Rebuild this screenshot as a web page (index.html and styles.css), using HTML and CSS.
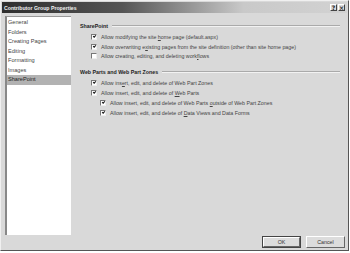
FILE: index.html
```html
<!DOCTYPE html>
<html>
<head>
	<title>Contributor Group Properties</title>
	<meta charset="utf-8">
	<link rel="stylesheet" href="styles.css">
</head>
<body>
<div class="dialog">
	<div class="titlebar">
		<span class="title">Contributor Group Properties</span>
		<span class="tbuttons">
			<span class="tbtn">?</span>
			<span class="tbtn">&#215;</span>
		</span>
	</div>

	<div class="main">
		<ul class="pages">
			<li>General</li>
			<li>Folders</li>
			<li>Creating Pages</li>
			<li>Editing</li>
			<li>Formatting</li>
			<li>Images</li>
			<li class="selected">SharePoint</li>
		</ul>

		<div class="panel">
			<div class="group">
				<div class="heading"><span>SharePoint</span><span class="rule"></span></div>
				<div class="row"><span class="box checked"></span><span>Allow modifying the site <u>h</u>ome page (default.aspx)</span></div>
				<div class="row"><span class="box checked"></span><span>Allow overwriting e<u>x</u>isting pages from the site definition (other than site home page)</span></div>
				<div class="row"><span class="box"></span><span>Allow creating, editing, and deleting work<u>f</u>lows</span></div>
			</div>

			<div class="group">
				<div class="heading"><span>Web Parts and Web Part Zones</span><span class="rule"></span></div>
				<div class="row"><span class="box checked"></span><span>Allow ins<u>e</u>rt, edit, and delete of Web Part Zones</span></div>
				<div class="row"><span class="box checked"></span><span>Allow insert, edit, and delete of <u>W</u>eb Parts</span></div>
				<div class="row sub"><span class="box checked"></span><span>Allow insert, edit, and delete of Web Parts <u>o</u>utside of Web Part Zones</span></div>
				<div class="row sub"><span class="box checked"></span><span>Allow insert, edit, and delete of <u>D</u>ata Views and Data Forms</span></div>
			</div>
		</div>
	</div>

	<div class="footer">
		<button class="btn default">OK</button>
		<button class="btn">Cancel</button>
	</div>
</div>
</body>
</html>
```

FILE: styles.css
```css
body {
    margin: 0;
    font-family: "Liberation Sans", Arial, sans-serif;
    font-size: 5.3px;
    color: #333;
    background: #fff;
}

.dialog {
    width: 349px;
    height: 251px;
    background-color: #d9d9d9;
    border: 1px solid;
    border-color: #f0f0f0 #555 #555 #f0f0f0;
    display: flex;
    flex-direction: column;
    padding: 1px 0 0 1px;
    box-sizing: border-box;
}

.titlebar {
    height: 11px;
    margin-right: 1px;
    background: linear-gradient(to right, #2e2e2e 0%, #555 35%, #c9c9c9 70%, #d2d2d2 100%);
    display: flex;
    align-items: center;
    justify-content: space-between;
    padding-left: 2px;
}

.title {
    color: #f2f2f2;
    font-weight: bold;
    font-size: 5.2px;
}

.tbuttons {
    display: flex;
    gap: 1px;
    margin-right: 2px;
}

.tbtn {
    width: 7px;
    height: 7px;
    background: #d9d9d9;
    border: 1px solid;
    border-color: #fff #444 #444 #fff;
    box-sizing: border-box;
    font-family: "DejaVu Sans", sans-serif;
    font-size: 6px;
    font-weight: bold;
    line-height: 5px;
    text-align: center;
    color: #222;
}

.main {
    flex: 1;
    display: flex;
    padding: 3px 0 0 3px;
}

.pages {
    list-style-type: none;
    margin: 0;
    padding: 1px 0 0 0;
    width: 66px;
    height: 219px;
    box-sizing: border-box;
    background-color: #fff;
    border-left: 2px solid #888;
    border-top: 1px solid #999;
    font-size: 5.6px;
    color: #444;
}

.pages li {
    height: 9.5px;
    line-height: 9.5px;
    padding-left: 1px;
}

.pages li.selected {
    background-color: #b2b2b2;
    color: #222;
}

.panel {
    flex: 1;
    padding: 5px 8px 0 9px;
}

.group {
    margin-bottom: 6px;
}

.heading {
    display: flex;
    align-items: center;
    font-weight: bold;
    color: #222;
    height: 9px;
    margin-bottom: 2px;
}

.rule {
    flex: 1;
    height: 0;
    border-top: 1px solid #aaa;
    border-bottom: 1px solid #f2f2f2;
    margin: 0 0 0 4px;
}

.row {
    display: flex;
    align-items: center;
    height: 9.8px;
    padding-left: 11px;
    color: #444;
}

.row.sub {
    padding-left: 20px;
}

.box {
    flex: none;
    width: 6px;
    height: 6px;
    box-sizing: border-box;
    background: #fff;
    border: 1px solid;
    border-color: #777 #eee #eee #777;
    margin-right: 4px;
    position: relative;
}

.box.checked::after {
    content: "";
    position: absolute;
    left: 0.5px;
    top: 0px;
    width: 2px;
    height: 1px;
    border: solid #111;
    border-width: 0 0 1.2px 1.2px;
    transform: rotate(-45deg);
}

.footer {
    display: flex;
    justify-content: flex-end;
    gap: 5px;
    padding: 0 3px 2px 0;
}

.btn {
    width: 39px;
    height: 12px;
    padding: 0;
    font-family: "Liberation Sans", Arial, sans-serif;
    font-size: 5.3px;
    color: #333;
    background-color: #dcdcdc;
    border: 1px solid;
    border-color: #fff #666 #666 #fff;
}

.btn.default {
    outline: 1px solid #444;
    outline-offset: -1px;
    border-width: 2px;
}
```
